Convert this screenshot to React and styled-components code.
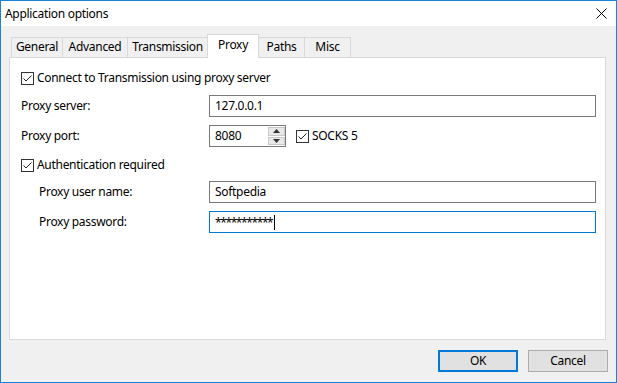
import React from 'react';
import styled, { createGlobalStyle } from 'styled-components';

const accent = '#1883d7';
const focusBlue = '#0078d7';
const lineGrey = '#d9d9d9';
const faceGrey = '#f0f0f0';

const Global = createGlobalStyle`
    html, body {
        margin: 0;
        padding: 0;
        background: #fff;
    }
    body {
        font-family: "Noto Sans", "Segoe UI", sans-serif;
        font-size: 12px;
        letter-spacing: -0.3px;
        color: #000;
    }
`;

const Window = styled.div`
    box-sizing: border-box;
    width: 617px;
    height: 383px;
    border: 1px solid ${accent};
    background: ${faceGrey};
    display: flex;
    flex-direction: column;
`;

const TitleBar = styled.div`
    height: 25px;
    background: #fff;
    display: flex;
    align-items: center;
    justify-content: space-between;
    padding-left: 4px;
`;

const Title = styled.span`
    font-size: 12px;
    line-height: 16px;
`;

const CloseButton = styled.div`
    width: 30px;
    height: 25px;
    display: flex;
    align-items: center;
    justify-content: center;
`;

const TabArea = styled.div`
    margin: 8px 10px 0 8px;
    display: flex;
    flex-direction: column;
`;

const TabRow = styled.div`
    display: flex;
    align-items: flex-end;
    height: 23px;
    padding-left: 2px;
    position: relative;
    z-index: 1;
`;

const Tab = styled.div`
    box-sizing: border-box;
    width: ${props => props.width}px;
    height: ${props => props.active ? 24 : 20}px;
    margin-left: ${props => props.first ? 0 : -1}px;
    margin-bottom: ${props => props.active ? -1 : 0}px;
    border: 1px solid ${lineGrey};
    border-bottom: none;
    background: ${props => props.active ? '#fff' : faceGrey};
    display: flex;
    justify-content: center;
    padding-top: ${props => props.active ? 2 : 1}px;
    line-height: 16px;
    white-space: nowrap;
    position: relative;
    z-index: ${props => props.active ? 2 : 1};
`;

const Panel = styled.div`
    box-sizing: border-box;
    height: 283px;
    background: #fff;
    border: 1px solid ${lineGrey};
    padding: 9px 9px 0 11px;
    display: flex;
    flex-direction: column;
`;

const Row = styled.div`
    display: flex;
    align-items: center;
    height: 22px;
    margin-top: ${props => props.top || 0}px;
`;

const Label = styled.div`
    width: ${props => props.indent ? 170 : 188}px;
    padding-left: ${props => props.indent ? 18 : 0}px;
    line-height: 16px;
    white-space: nowrap;
`;

const TextBox = styled.div`
    box-sizing: border-box;
    flex: 1;
    height: 22px;
    border: 1px solid ${props => props.focused ? focusBlue : '#7a7a7a'};
    background: #fff;
    padding-left: 5px;
    display: flex;
    align-items: center;
    line-height: 16px;
    white-space: nowrap;
`;

const Masked = styled.span`
    letter-spacing: -1.4px;
    padding-top: 2px;
`;

const Caret = styled.span`
    display: inline-block;
    width: 1px;
    height: 15px;
    background: #000;
    margin-left: 2px;
`;

const CheckLabel = styled.label`
    display: flex;
    align-items: center;
    gap: 3px;
    line-height: 16px;
    white-space: nowrap;
    margin-left: ${props => props.left || 0}px;
`;

const Box = styled.span`
    box-sizing: border-box;
    width: 13px;
    height: 13px;
    border: 1px solid #333;
    background: #fff;
    display: flex;
    align-items: center;
    justify-content: center;
`;

const Spin = styled.div`
    box-sizing: border-box;
    width: 77px;
    height: 22px;
    border: 1px solid #7a7a7a;
    background: #fff;
    display: flex;
    align-items: stretch;
`;

const SpinText = styled.div`
    flex: 1;
    padding-left: 5px;
    display: flex;
    align-items: center;
    line-height: 16px;
`;

const SpinButtons = styled.div`
    width: 17px;
    display: flex;
    flex-direction: column;
    gap: 1px;
    padding: 1px 0;
`;

const SpinButton = styled.div`
    flex: 1;
    box-sizing: border-box;
    border: 1px solid #c8c8c8;
    background: #e8e8e8;
    display: flex;
    align-items: center;
    justify-content: center;
`;

const Footer = styled.div`
    display: flex;
    justify-content: flex-end;
    gap: 10px;
    padding: 10px 8px 0 0;
`;

const Button = styled.div`
    box-sizing: border-box;
    width: 80px;
    height: 22px;
    background: #e1e1e1;
    border: ${props => props.primary ? `2px solid ${focusBlue}` : '1px solid #adadad'};
    display: flex;
    align-items: center;
    justify-content: center;
    line-height: 16px;
`;

const Check = () => (
    <Box>
        <svg width="11" height="11" viewBox="0 0 11 11">
            <path d="M1.5 5.5 L4 8 L9.5 2.5" fill="none" stroke="#222" strokeWidth="1" />
        </svg>
    </Box>
);

const CheckBox = ({ children, left }) => (
    <CheckLabel left={left}>
        <Check />
        <span>{children}</span>
    </CheckLabel>
);

const Arrow = ({ up }) => (
    <svg width="7" height="4" viewBox="0 0 7 4">
        <path d={up ? 'M0 4 L3.5 0 L7 4 Z' : 'M0 0 L3.5 4 L7 0 Z'} fill="#333" />
    </svg>
);

const tabs = [
    { name: 'General', width: 52 },
    { name: 'Advanced', width: 66 },
    { name: 'Transmission', width: 81 },
    { name: 'Proxy', width: 52, active: true },
    { name: 'Paths', width: 47 },
    { name: 'Misc', width: 47 },
];

export default function App() {
    return <>
        <Global />
        <Window>
            <TitleBar>
                <Title>Application options</Title>
                <CloseButton>
                    <svg width="11" height="11" viewBox="0 0 11 11">
                        <path d="M0.5 0.5 L10.5 10.5 M10.5 0.5 L0.5 10.5" stroke="#000" strokeWidth="1" />
                    </svg>
                </CloseButton>
            </TitleBar>
            <TabArea>
                <TabRow>
                    {tabs.map((t, i) => (
                        <Tab key={t.name} width={t.width} active={t.active} first={i === 0}>{t.name}</Tab>
                    ))}
                </TabRow>
                <Panel>
                    <Row>
                        <CheckBox>Connect to Transmission using proxy server</CheckBox>
                    </Row>
                    <Row top={6}>
                        <Label>Proxy server:</Label>
                        <TextBox>127.0.0.1</TextBox>
                    </Row>
                    <Row top={8}>
                        <Label>Proxy port:</Label>
                        <Spin>
                            <SpinText>8080</SpinText>
                            <SpinButtons>
                                <SpinButton><Arrow up /></SpinButton>
                                <SpinButton><Arrow /></SpinButton>
                            </SpinButtons>
                        </Spin>
                        <CheckBox left={10}>SOCKS 5</CheckBox>
                    </Row>
                    <Row top={7}>
                        <CheckBox>Authentication required</CheckBox>
                    </Row>
                    <Row top={5}>
                        <Label indent>Proxy user name:</Label>
                        <TextBox>Softpedia</TextBox>
                    </Row>
                    <Row top={8}>
                        <Label indent>Proxy password:</Label>
                        <TextBox focused><Masked>***********</Masked><Caret /></TextBox>
                    </Row>
                </Panel>
            </TabArea>
            <Footer>
                <Button primary>OK</Button>
                <Button>Cancel</Button>
            </Footer>
        </Window>
    </>;
}
